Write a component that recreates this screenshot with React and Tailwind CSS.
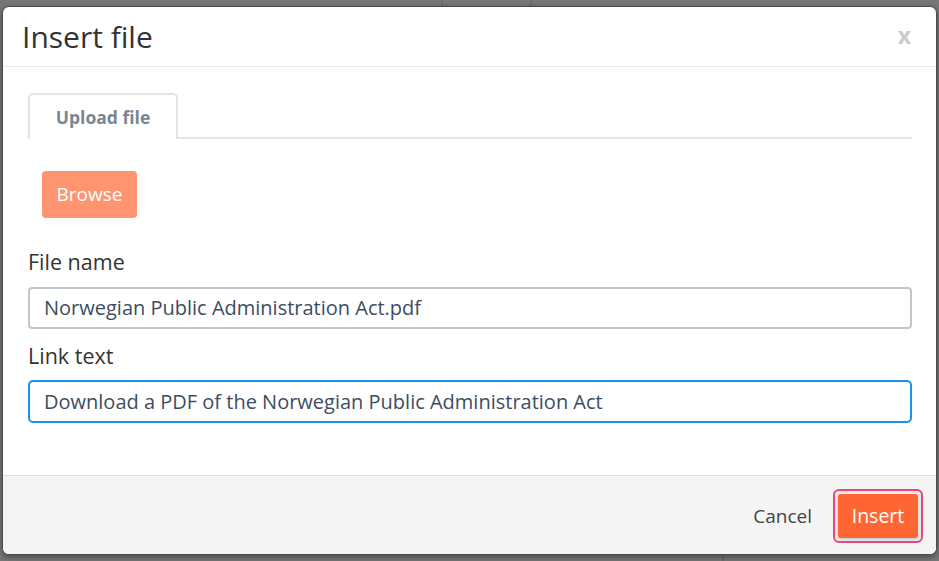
import React from 'react';

const App = () => {
    return (
        <div
            className="relative w-[939px] h-[561px] overflow-hidden bg-[#777777] pt-[6px] pl-[2px]"
            style={{ fontFamily: '"Open Sans", "Liberation Sans", sans-serif' }}
        >
            <div className="absolute left-[441px] top-0 w-[2px] h-[6px] bg-[#6c6c6c]"></div>
            <div className="absolute left-[530px] top-0 w-[2px] h-[6px] bg-[#6c6c6c]"></div>
            <div className="absolute left-[722px] bottom-0 w-[2px] h-[7px] bg-[#6a6a6a]"></div>

            <div className="relative w-[935px] h-[549px] bg-white rounded-[7px] border border-[#4a4a4a] flex flex-col overflow-hidden shadow-[0_2px_6px_rgba(0,0,0,0.4)]">
                <header className="h-[60px] shrink-0 flex items-center justify-between pl-[19px] pr-[25px] border-b border-[#ececec]">
                    <h1 className="text-[30px] leading-[40px] text-[#333333]">Insert file</h1>
                    <button className="text-[23px] font-bold text-[#cccccc] leading-none -mt-[2px]">x</button>
                </header>

                <main className="flex-1 pt-[26px] pl-[25px] pr-[24px]">
                    <div className="flex border-b-2 border-[#e1e4e8]">
                        <div className="w-[150px] h-[46px] -mb-[2px] flex items-center justify-center border-2 border-b-0 border-[#e1e4e8] rounded-t-[5px] bg-white">
                            <span className="text-[17.5px] font-bold text-[#7a8594] mt-[1px]">Upload file</span>
                        </div>
                    </div>

                    <div className="pt-[32px] pl-[14px]">
                        <button className="w-[95px] h-[47px] rounded-[4px] bg-[#ff9570] text-white text-[19px]">Browse</button>
                    </div>

                    <label className="block mt-[29px] text-[21.5px] leading-[30px] text-[#333333]">File name</label>
                    <div className="mt-[10px] h-[42px] rounded-[4px] border-2 border-[#c2c7cc] flex items-center pl-[14px] text-[20px] text-[#3d4d61]">
                        Norwegian Public Administration Act.pdf
                    </div>

                    <label className="block mt-[12px] text-[21.5px] leading-[30px] text-[#333333]">Link text</label>
                    <div className="mt-[9px] h-[43px] rounded-[5px] border-2 border-[#1893e8] flex items-center pl-[14px] text-[20px] text-[#3d4d61]">
                        Download a PDF of the Norwegian Public Administration Act
                    </div>
                </main>

                <footer className="h-[79px] shrink-0 bg-[#f4f4f4] border-t border-[#dddddd] flex items-center justify-end pr-[13px] pt-[2px] gap-[21px]">
                    <button className="text-[19px] text-[#444444]">Cancel</button>
                    <div className="p-[3px] rounded-[6px] border-2 border-[#e8467c] bg-[#e8e8e8]">
                        <button className="w-[80px] h-[44px] rounded-[3px] bg-[#ff6633] text-white text-[19.5px] shadow-[0_1px_2px_rgba(0,0,0,0.15)]">Insert</button>
                    </div>
                </footer>
            </div>
        </div>
    );
};

export default App;
